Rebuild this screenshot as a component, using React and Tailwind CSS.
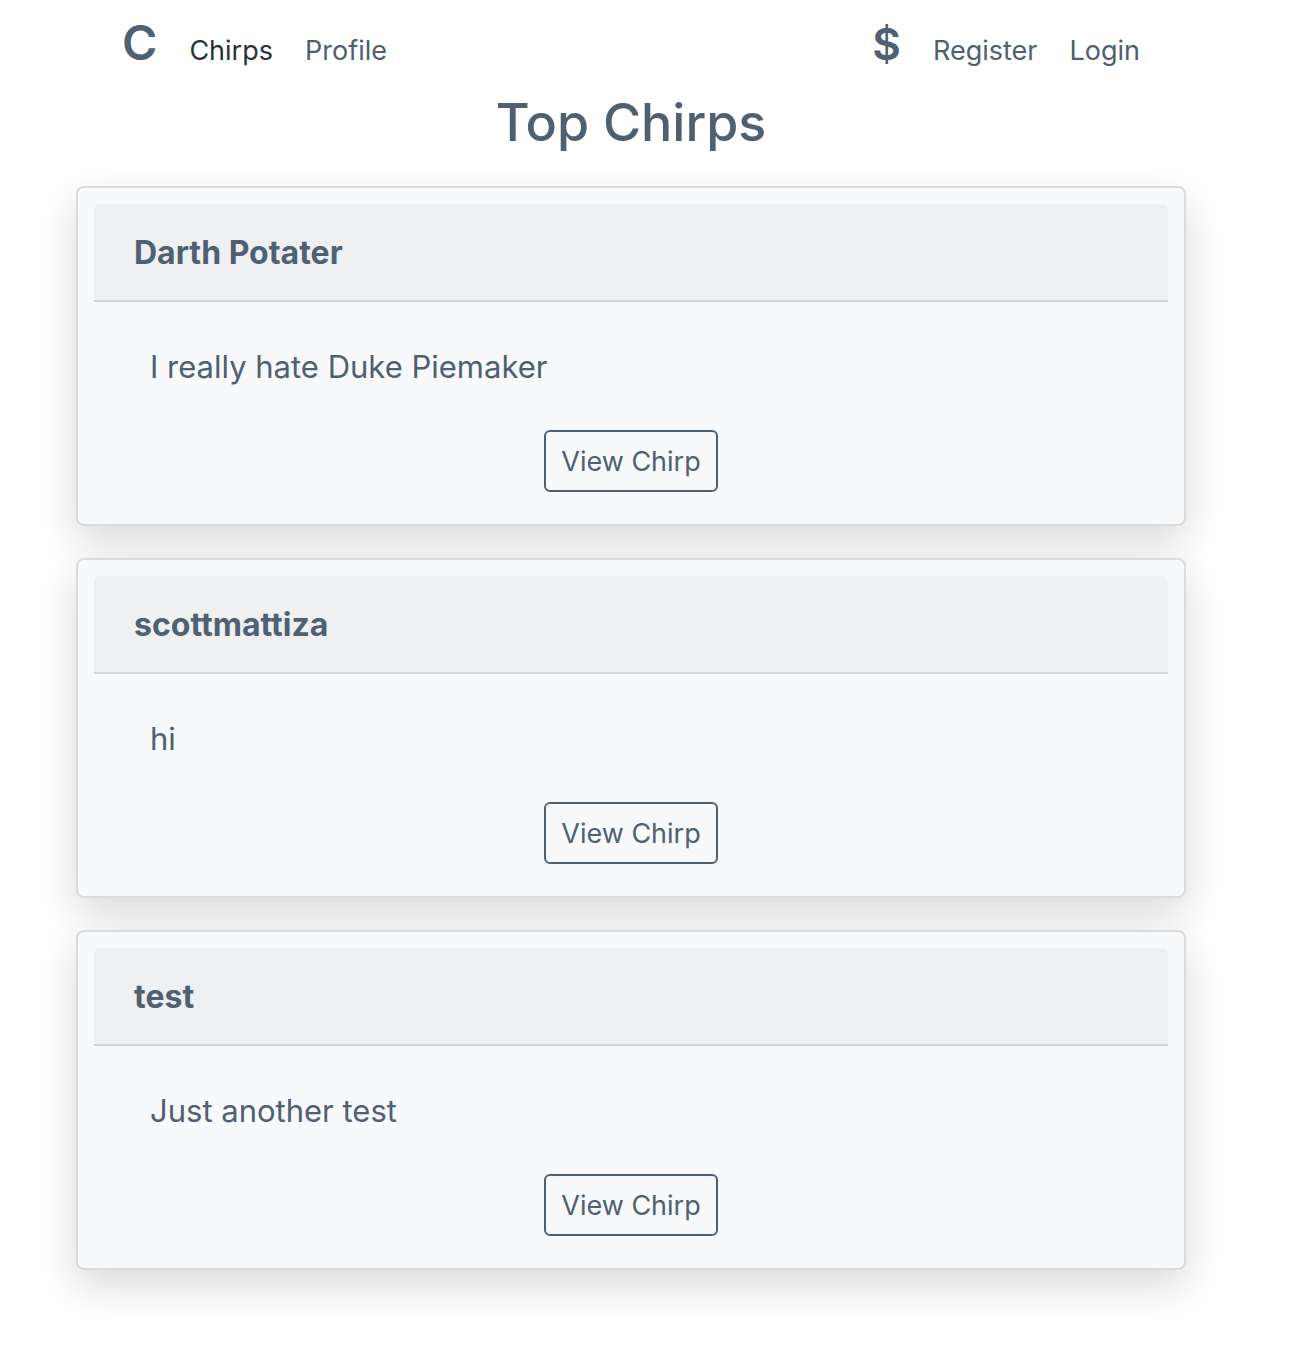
const chirps = [
  { author: "Darth Potater", text: "I really hate Duke Piemaker" },
  { author: "scottmattiza", text: "hi" },
  { author: "test", text: "Just another test" },
];

function ChirpCard({ author, text }) {
  return (
    <article className="rounded-lg border-2 border-[#d9dbdd] bg-[#f8f9fb] p-4 shadow-[0_16px_40px_rgba(0,0,0,0.15)]">
      <h2 className="rounded-t-md border-b-2 border-[#d2d4d7] bg-[#eff0f2] px-10 pt-[25px] pb-[23px] text-[32px] leading-[48px] font-bold">
        {author}
      </h2>
      <div className="flex flex-col items-center px-10 pb-4 pt-10">
        <p className="w-full px-4 text-[31px] leading-[50px]">{text}</p>
        <button className="mt-[38px] rounded-md border-2 border-[#4e6071] px-[15px] pt-[9px] pb-[7px] text-[27px] leading-[42px]">
          View Chirp
        </button>
      </div>
    </article>
  );
}

export default function App() {
  return (
    <div className="min-h-screen bg-white pr-[104px] pl-[76px] font-['Inter',sans-serif] text-[#4e6071]">
      <nav className="flex items-baseline justify-between px-[46px] pt-[7px] text-[27px] leading-[42px]">
        <div className="flex items-baseline gap-8">
          <a href="#" className="text-[48px] leading-[72px] font-semibold">C</a>
          <a href="#" className="text-[#28323c]">Chirps</a>
          <a href="#">Profile</a>
        </div>
        <div className="flex items-baseline gap-8">
          <a href="#" className="text-[44px] leading-[66px] font-semibold">$</a>
          <a href="#">Register</a>
          <a href="#">Login</a>
        </div>
      </nav>
      <h1 className="text-center text-[52px] leading-[88px] font-medium">Top Chirps</h1>
      <main className="mt-[19px] flex flex-col gap-8">
        {chirps.map((chirp) => (
          <ChirpCard key={chirp.author} {...chirp} />
        ))}
      </main>
    </div>
  );
}
